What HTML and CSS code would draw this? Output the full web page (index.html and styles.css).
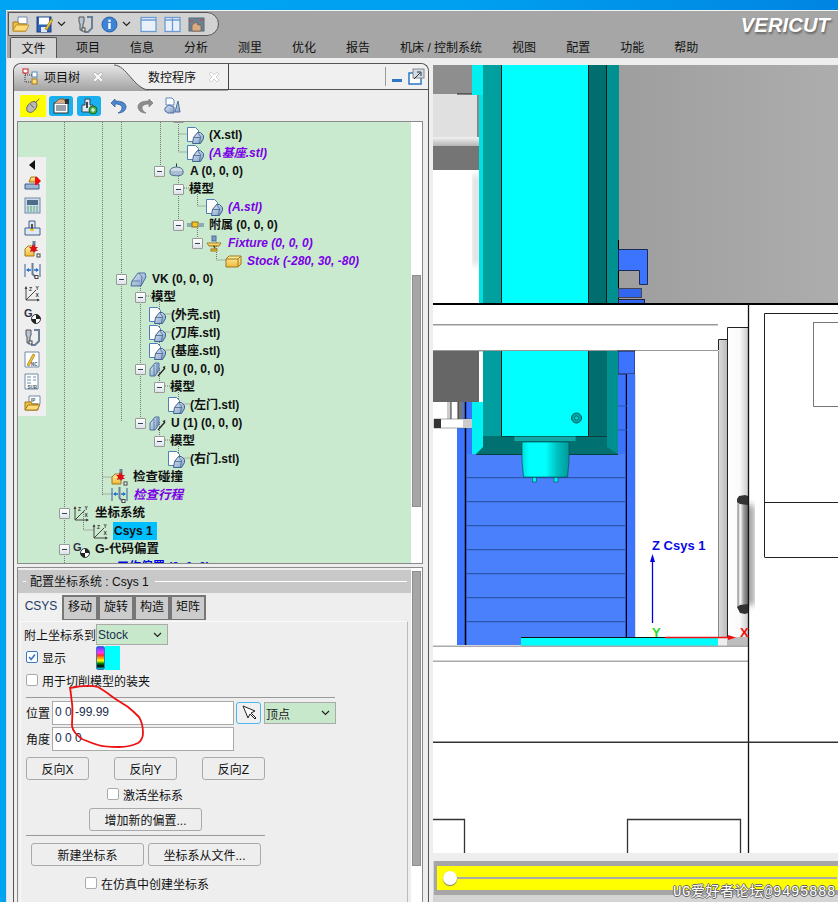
FILE: index.html
```html
<!DOCTYPE html>
<html lang="zh">
<head>
<meta charset="utf-8">
<title>VERICUT</title>
<link rel="stylesheet" href="styles.css">
</head>
<body>
<svg class="defs" aria-hidden="true">
  <defs>
    <linearGradient id="prism" x1="0" y1="0" x2="1" y2="1"><stop offset="0" stop-color="#dfe9f5"/><stop offset="1" stop-color="#7f9cc4"/></linearGradient>
    <linearGradient id="gold" x1="0" y1="0" x2="0" y2="1"><stop offset="0" stop-color="#fff2a8"/><stop offset="1" stop-color="#f0b93c"/></linearGradient>
    <symbol id="i-stl" viewBox="0 0 17 17"><path d="M.5.5h8l3 3v11H.5z" fill="#fff" stroke="#4f7fb8"/><path d="M5.500 16.500l1-6 4-5h3l3 3v3l-3 5z" fill="url(#prism)" stroke="#3f638f"/><path d="M10.500 5.500l3 4-1 7M6.500 10.500h7" fill="none" stroke="#3f638f" stroke-width=".8"/></symbol>
    <symbol id="i-a" viewBox="0 0 17 17"><path d="M8.500 .5v5" stroke="#333"/><ellipse cx="8.500" cy="8" rx="6.500" ry="4" fill="#cfdbe8" stroke="#56718f"/><path d="M2 8v2.500c0 3 13 3 13 0V8" fill="#a9bdd3" stroke="#56718f"/></symbol>
    <symbol id="i-vk" viewBox="0 0 17 17"><path d="M1 15l1-5 6-8h7l1 4-5 9z" fill="url(#prism)" stroke="#4a6f9f"/><path d="M9 2l3 4-1 9M2 10h8" fill="none" stroke="#4a6f9f" stroke-width=".8"/></symbol>
    <symbol id="i-u" viewBox="0 0 17 17"><path d="M1 15V8l5-6h4v7l-4 6z" fill="url(#prism)" stroke="#4a6f9f"/><path d="M5 4v11M8 3v9" stroke="#4a6f9f" stroke-width=".8"/><path d="M9 15l7-8" stroke="#222" stroke-width="1.300"/><path d="M16.500 5l-3 1 2 2z" fill="#222"/></symbol>
    <symbol id="i-att" viewBox="0 0 17 17"><path d="M0 7h5M12 7h5M0 9h5M12 9h5" stroke="#4a6f9f"/><rect x="5" y="5" width="6" height="5" fill="#f5c52f" stroke="#8b6a14"/></symbol>
    <symbol id="i-fix" viewBox="0 0 17 17"><rect x="6" y="1" width="4" height="5" fill="#7f9cc4" stroke="#4a6f9f"/><path d="M1 8h14l-2 3H3z" fill="url(#gold)" stroke="#a0781c"/><path d="M7 11h2v3" stroke="#a0781c"/><rect x="5" y="14" width="6" height="2" fill="#f5c52f" stroke="#a0781c"/></symbol>
    <symbol id="i-stock" viewBox="0 0 17 17"><path d="M1 6l3-3h12v8l-3 3H1z" fill="url(#gold)" stroke="#a0781c"/><path d="M1 6h12v8M13 6l3-3" fill="none" stroke="#a0781c"/></symbol>
    <symbol id="i-col" viewBox="0 0 17 17"><path d="M1 8l3-3h6v10H1z" fill="url(#gold)" stroke="#a0781c"/><path d="M10 0v11" stroke="#6b7f98" stroke-width="3"/><path d="M8 3l1 2 2-2 0 3 3 0-2 2 2 2-3 0-1 2-1-2-3 1 1-3-2-2h3z" fill="#dc0f14"/><rect x="13" y="13" width="3" height="3" fill="#fff" stroke="#444"/></symbol>
    <symbol id="i-trv" viewBox="0 0 17 17"><path d="M1 1v13M16 1v13" stroke="#3a5f95"/><path d="M3 7h4M10 7h4" stroke="#1f6fd0" stroke-width="1.300"/><path d="M2 7l3-2v4zM15 7l-3-2v4z" fill="#1f6fd0"/><path d="M8.500 0v11l3 3" fill="none" stroke="#6b7f98" stroke-width="2"/><rect x="11" y="12.500" width="3" height="3" fill="#fff" stroke="#444"/></symbol>
    <symbol id="i-csys" viewBox="0 0 17 17"><path d="M2 2v13h13M2 15L12 5" fill="none" stroke="#444"/><path d="M2 1L.5 4h3zM16 15l-3-1.500v3z" fill="#444"/><text x="5" y="6" class="ic-t">Z</text><text x="11.500" y="5" class="ic-t">Y</text><text x="11.500" y="12" class="ic-t">X</text></symbol>
    <symbol id="i-g" viewBox="0 0 17 17"><text x="0" y="10" class="ic-g">G</text><circle cx="12" cy="12" r="4.500" fill="#fff" stroke="#333"/><path d="M12 7.500a4.500 4.500 0 0 1 4.500 4.500H12zM12 16.500A4.500 4.500 0 0 1 7.500 12H12z" fill="#222"/></symbol>
    <symbol id="i-tool" viewBox="0 0 17 17"><path d="M2 1h5v5l-1 2v6H3V8L2 6z" fill="#b7c4d3" stroke="#555"/><path d="M10 1h5v11l-4 4H7" fill="none" stroke="#6b7f98" stroke-width="2"/><rect x="5" y="12" width="3" height="3" fill="#fff" stroke="#444"/></symbol>
    <symbol id="i-print" viewBox="0 0 17 17"><path d="M5 7l2-5h6v5z" fill="url(#gold)" stroke="#a0781c"/><path d="M1 9h14v5H1z" fill="#9db6d4" stroke="#3f5f88"/><path d="M11 2h2l4 4-4 4h-2z" fill="#ef0d0d"/></symbol>
    <symbol id="i-mon" viewBox="0 0 17 17"><rect x="1" y="1" width="15" height="15" fill="#cfdbe8" stroke="#6e8aa8"/><rect x="3" y="3" width="11" height="5" fill="#4d6d88"/><path d="M3 10h11M3 12h11M3 14h11" stroke="#5a7" stroke-dasharray="2 1"/></symbol>
    <symbol id="i-fix2" viewBox="0 0 17 17"><path d="M1 9h15v7H1zM5 9V2h6v7" fill="#dfe9f5" stroke="#3f5f88"/><rect x="7" y="5" width="2" height="6" fill="#555"/><rect x="6" y="10" width="4" height="2" fill="#f5c52f"/></symbol>
    <symbol id="i-nc" viewBox="0 0 17 17"><path d="M1 1h14v15H1z" fill="#fff" stroke="#6e8aa8"/><path d="M3 14L9 3l2 1-6 11z" fill="#f5c52f" stroke="#8b6a14" stroke-width=".6"/><text x="7" y="15" class="ic-s">NC</text></symbol>
    <symbol id="i-sub" viewBox="0 0 17 17"><path d="M1 1h13v15H1z" fill="#fff" stroke="#6e8aa8"/><path d="M3 4h4M9 4h3M3 7h4M9 7h3M3 10h4" stroke="#6e8aa8"/><text x="3.500" y="16" class="ic-s">SUB</text></symbol>
    <symbol id="i-ip" viewBox="0 0 17 17"><path d="M5 1h11v8H5z" fill="#fff" stroke="#6e8aa8"/><text x="7" y="7" class="ic-s">IP</text><path d="M1 7h6l1 2h6v6H1z" fill="#f2bf3e" stroke="#a0781c"/><path d="M1 15l3-5h12l-3 5z" fill="#ffdc78" stroke="#a0781c"/></symbol>
    <symbol id="chev" viewBox="0 0 9 6"><path d="M1 1l3.500 3.500L8 1" fill="none" stroke="#222" stroke-width="1.200"/></symbol>
    <symbol id="x-mark" viewBox="0 0 12 12"><path d="M1 3l2-2 3 3 3-3 2 2-3 3 3 3-2 2-3-3-3 3-2-2 3-3z"/></symbol>
  </defs>
</svg>

<div class="top-band"></div>
<div class="window">
  <header class="titlebar">
    <div class="quick">
      <svg class="q-ic" viewBox="0 0 17 17"><path d="M6 1h9v7H6z" fill="#fff" stroke="#6e8aa8"/><path d="M1 6h5l1 2h7v7H1z" fill="#f2bf3e" stroke="#a0781c"/><path d="M1 15l3-6h13l-3 6z" fill="#ffdc78" stroke="#c4952a"/></svg>
      <svg class="q-ic" viewBox="0 0 17 17"><rect x="1" y="1" width="14" height="15" fill="#2f63b8" stroke="#1d4080"/><rect x="3" y="1.500" width="10" height="7" fill="#fff"/><rect x="5" y="11" width="6" height="5" fill="#dfe9f5"/><path d="M9 13L15 3l2 1-6 10z" fill="#f5c52f" stroke="#8b6a14" stroke-width=".6"/></svg>
      <svg class="q-ch"><use href="#chev"/></svg>
      <svg class="q-ic q-tool"><use href="#i-tool"/></svg>
      <svg class="q-ic" viewBox="0 0 17 17"><circle cx="8.500" cy="8.500" r="7.500" fill="#3e84d6" stroke="#2a5ea5"/><circle cx="8.500" cy="4.800" r="1.300" fill="#fff"/><rect x="7.300" y="7" width="2.400" height="6" fill="#fff"/></svg>
      <svg class="q-ch"><use href="#chev"/></svg>
      <svg class="q-ic q-win" viewBox="0 0 17 17"><rect x="1" y="1.500" width="15" height="14" fill="#e8f0fa" stroke="#6b9bd2" stroke-width="1.300"/><path d="M1 4h15" stroke="#6b9bd2" stroke-width="1.500"/></svg>
      <svg class="q-ic" viewBox="0 0 17 17"><rect x="1" y="1.500" width="15" height="14" fill="#e8f0fa" stroke="#6b9bd2" stroke-width="1.300"/><path d="M1 4h15M8.500 2v13" stroke="#6b9bd2" stroke-width="1.300"/></svg>
      <svg class="q-ic" viewBox="0 0 17 17"><rect x="1" y="2" width="15" height="13" fill="#6a8296" stroke="#56687a"/><path d="M4 15V9l4-3 2 3h3v6z" fill="#d8ab84" stroke="#7a5a3c" stroke-width=".7"/><path d="M2 5h3M12 4h3" stroke="#e33"/></svg>
    </div>
    <div class="logo">VERICUT</div>
  </header>
  <nav class="menu">
    <span class="menu-item active">文件</span><span class="menu-item second">项目</span><span class="menu-item">信息</span><span class="menu-item">分析</span><span class="menu-item">测里</span><span class="menu-item">优化</span><span class="menu-item">报告</span><span class="menu-item">机床 / 控制系统</span><span class="menu-item">视图</span><span class="menu-item">配置</span><span class="menu-item">功能</span><span class="menu-item">帮助</span>
  </nav>

  <main class="work">
    <section class="panel">
      <div class="tabs">
        <svg class="tab-shape" viewBox="0 0 216 27" preserveAspectRatio="none">
          <defs><linearGradient id="tabg" x1="0" y1="0" x2="0" y2="1"><stop offset="0" stop-color="#e6e6e6"/><stop offset="1" stop-color="#a2a2a2"/></linearGradient></defs>
          <path d="M0 27V8Q0 1 8 1H100C112 1 120 24 134 26V27Z" fill="url(#tabg)"/>
          <path d="M100 1C112 1 120 24 134 26H214" fill="none" stroke="#555"/>
          <path d="M214.500 0v26" stroke="#444"/>
        </svg>
        <div class="tab tab-a">
          <svg class="tab-ic" viewBox="0 0 17 17"><rect x="1" y="1" width="5" height="4" fill="#fff" stroke="#c22"/><rect x="10" y="4" width="5" height="5" fill="#fff" stroke="#5b88bd"/><rect x="10" y="11" width="5" height="5" fill="#ffdc78" stroke="#a0781c"/><path d="M3 5v9h7M3 7h7" fill="none" stroke="#333" stroke-dasharray="1 1"/></svg>
          <span>项目树</span><svg class="tab-x"><use href="#x-mark"/></svg>
        </div>
        <div class="tab tab-b"><span>数控程序</span><svg class="tab-x dim"><use href="#x-mark"/></svg></div>
        <div class="tab-tools">
          <span class="tab-sep"></span>
          <span class="tab-min"></span>
          <svg class="tab-max" viewBox="0 0 17 17"><rect x="1" y="5" width="12" height="11" fill="#fff" stroke="#2e77c4" stroke-width="1.500"/><rect x="5" y="1" width="11" height="9" fill="#cfdbe8" stroke="#888"/><path d="M6 11l6-6M9 4h4v4" fill="none" stroke="#333"/></svg>
        </div>
      </div>

      <div class="tools">
        <span class="tool-btn yellow"><svg viewBox="0 0 20 20"><path d="M3 13c0-4 5-8 8-8s4 3 3 6-5 7-8 6-3-2-3-4z" fill="#b9b9b9" stroke="#555"/><path d="M7 8l4 4M13 6l4-4" stroke="#555"/></svg></span>
        <span class="tool-btn blue"><svg viewBox="0 0 18 18"><rect x="2" y="6" width="14" height="10" fill="#fff" stroke="#333"/><path d="M4 9h10M4 11h10M4 13h10" stroke="#345"/><path d="M3 6l4-4h5l2 4" fill="#d8ab84" stroke="#7a5a3c"/><rect x="13" y="2" width="4" height="5" fill="#333"/></svg></span>
        <span class="tool-btn blue"><svg viewBox="0 0 18 18"><path d="M2 15V8h3V2h5v6h3v7z" fill="#dfe9f5" stroke="#345"/><rect x="6" y="5" width="2" height="6" fill="#444"/><circle cx="13" cy="13" r="4" fill="#4cb04c" stroke="#1a6a1a"/><path d="M11 13h4M13 11v4" stroke="#fff"/></svg></span>
        <svg class="tool-plain first" viewBox="0 0 17 17"><path d="M5 2L1 6l4 4V7c4 0 7 1 7 4 0 2-2 4-4 5 5 0 8-3 8-6 0-4-4-6-11-6z" fill="#4e88cf" stroke="#26558f" stroke-width=".7"/></svg>
        <svg class="tool-plain" viewBox="0 0 17 17"><path d="M12 2l4 4-4 4V7C8 7 5 8 5 11c0 2 2 4 4 5-5 0-8-3-8-6 0-4 4-6 11-6z" fill="#8c8c8c" stroke="#777" stroke-width=".7"/></svg>
        <svg class="tool-plain" viewBox="0 0 17 17"><path d="M2 1h6l2 2v5H2z" fill="#fff" stroke="#5b88bd"/><path d="M1 11l4-3 5 2v6H4l-3-2z" fill="url(#prism)" stroke="#4a6f9f"/><path d="M11 15l3-11 2 11z" fill="url(#prism)" stroke="#4a6f9f"/></svg>
      </div>

      <div class="tree-box">
        <div class="tree">
          <svg class="tree-lines" viewBox="18 122 393 441">
            <path d="M64.500 122V563M102.500 122V495M121.500 122V422M160.500 122V170M178.500 122V152M178.500 134H190M178.500 152H190M178.500 170V224M184 188H189M197.500 188V206M197.500 206H208M197.500 224V242M216.500 242V260M216.500 260H228M140.500 278V422M146 296H151M159.500 296V350M159.500 314H171M159.500 332H171M159.500 350H171M159.500 368V386M165 386H170M178.500 386V404M178.500 404H190M159.500 422V440M165 440H170M178.500 440V458M178.500 458H190M102.500 477H113M102.500 494H113M83.500 512V530M83.500 530H94" fill="none" stroke="#777" stroke-dasharray="1 1"/>
          </svg>
          <div class="rows">
            <div class="row l6"><span class="tg"></span><span class="lbl big">模型</span></div>
            <div class="row l6"><span class="sp"></span><svg class="ic"><use href="#i-stl"/></svg><span class="lbl">(X.stl)</span></div>
            <div class="row l6"><span class="sp"></span><svg class="ic"><use href="#i-stl"/></svg><span class="lbl it">(A基座.stl)</span></div>
            <div class="row l5"><span class="tg"></span><svg class="ic"><use href="#i-a"/></svg><span class="lbl">A (0, 0, 0)</span></div>
            <div class="row l6"><span class="tg"></span><span class="lbl big">模型</span></div>
            <div class="row l7"><span class="sp"></span><svg class="ic"><use href="#i-stl"/></svg><span class="lbl it">(A.stl)</span></div>
            <div class="row l6"><span class="tg"></span><svg class="ic"><use href="#i-att"/></svg><span class="lbl">附属 (0, 0, 0)</span></div>
            <div class="row l7"><span class="tg"></span><svg class="ic"><use href="#i-fix"/></svg><span class="lbl it">Fixture (0, 0, 0)</span></div>
            <div class="row l8"><span class="sp"></span><svg class="ic"><use href="#i-stock"/></svg><span class="lbl it">Stock (-280, 30, -80)</span></div>
            <div class="row l3"><span class="tg"></span><svg class="ic"><use href="#i-vk"/></svg><span class="lbl">VK (0, 0, 0)</span></div>
            <div class="row l4"><span class="tg"></span><span class="lbl big">模型</span></div>
            <div class="row l4"><span class="sp"></span><svg class="ic"><use href="#i-stl"/></svg><span class="lbl">(外壳.stl)</span></div>
            <div class="row l4"><span class="sp"></span><svg class="ic"><use href="#i-stl"/></svg><span class="lbl">(刀库.stl)</span></div>
            <div class="row l4"><span class="sp"></span><svg class="ic"><use href="#i-stl"/></svg><span class="lbl">(基座.stl)</span></div>
            <div class="row l4"><span class="tg"></span><svg class="ic"><use href="#i-u"/></svg><span class="lbl">U (0, 0, 0)</span></div>
            <div class="row l5"><span class="tg"></span><span class="lbl big">模型</span></div>
            <div class="row l5"><span class="sp"></span><svg class="ic"><use href="#i-stl"/></svg><span class="lbl">(左门.stl)</span></div>
            <div class="row l4"><span class="tg"></span><svg class="ic"><use href="#i-u"/></svg><span class="lbl">U (1) (0, 0, 0)</span></div>
            <div class="row l5"><span class="tg"></span><span class="lbl big">模型</span></div>
            <div class="row l5"><span class="sp"></span><svg class="ic"><use href="#i-stl"/></svg><span class="lbl">(右门.stl)</span></div>
            <div class="row l2"><span class="sp"></span><svg class="ic"><use href="#i-col"/></svg><span class="lbl big">检查碰撞</span></div>
            <div class="row l2"><span class="sp"></span><svg class="ic"><use href="#i-trv"/></svg><span class="lbl it big">检查行程</span></div>
            <div class="row l0"><span class="tg"></span><svg class="ic"><use href="#i-csys"/></svg><span class="lbl big">坐标系统</span></div>
            <div class="row l1"><span class="sp"></span><svg class="ic"><use href="#i-csys"/></svg><span class="lbl sel">Csys 1</span></div>
            <div class="row l0"><span class="tg"></span><svg class="ic"><use href="#i-g"/></svg><span class="lbl big">G-代码偏置</span></div>
            <div class="row l1"><span class="sp"></span><span class="lbl blue-t">工作偏置 (0, 0, 0)</span></div>
          </div>
          <div class="side-tools">
            <span class="side-arrow"></span>
            <svg class="ic"><use href="#i-print"/></svg>
            <svg class="ic"><use href="#i-mon"/></svg>
            <svg class="ic"><use href="#i-fix2"/></svg>
            <svg class="ic"><use href="#i-col"/></svg>
            <svg class="ic"><use href="#i-trv"/></svg>
            <svg class="ic"><use href="#i-csys"/></svg>
            <svg class="ic"><use href="#i-g"/></svg>
            <svg class="ic"><use href="#i-tool"/></svg>
            <svg class="ic"><use href="#i-nc"/></svg>
            <svg class="ic"><use href="#i-sub"/></svg>
            <svg class="ic"><use href="#i-ip"/></svg>
          </div>
        </div>
        <div class="scroll tree-scroll"><span class="thumb"></span></div>
      </div>

      <div class="cfg-box">
        <div class="cfg">
          <div class="cfg-head"><span class="cfg-dash"></span><span class="cfg-title">配置坐标系统 : Csys 1</span><span class="cfg-line"></span></div>
          <div class="cfg-tabs">
            <span class="ctab on">CSYS</span><span class="ctab">移动</span><span class="ctab">旋转</span><span class="ctab">构造</span><span class="ctab">矩阵</span>
          </div>
          <div class="page">
            <div class="f-attach"><span class="f-attach-l">附上坐标系到</span><span class="select s-stock">Stock<svg class="sel-ch"><use href="#chev"/></svg></span></div>
            <div class="f-show">
              <span class="chk on"><svg viewBox="0 0 12 12"><path d="M2.500 6l2.500 3 4.500-6" fill="none" stroke="#3a78c0" stroke-width="2"/></svg></span>
              <span class="chk-l show-l">显示</span>
              <span class="swatch"><span class="sw-bar"></span><span class="sw-col"></span></span>
            </div>
            <div class="f-check f-use"><span class="chk"></span><span class="chk-l">用于切削模型的装夹</span></div>
            <hr class="rule r-long">
            <div class="f-input"><span class="in-l">位置</span><span class="input">0 0 -99.99</span>
              <span class="pick"><svg viewBox="0 0 18 18"><path d="M3 2l5 12 2-4 5 5 1-1-5-5 4-2z" fill="#fff" stroke="#222"/></svg></span>
              <span class="select s-vertex">顶点<svg class="sel-ch"><use href="#chev"/></svg></span>
            </div>
            <div class="f-input f-angle"><span class="in-l">角度</span><span class="input">0 0 0</span></div>
            <div class="f-rev"><span class="btn b-rev">反向X</span><span class="btn b-rev">反向Y</span><span class="btn b-rev">反向Z</span></div>
            <div class="f-check f-act"><span class="chk"></span><span class="chk-l">激活坐标系</span></div>
            <div class="f-add"><span class="btn b-add">增加新的偏置...</span></div>
            <hr class="rule r-short">
            <div class="f-new"><span class="btn b-new">新建坐标系</span><span class="btn b-new">坐标系从文件...</span></div>
            <div class="f-check f-sim"><span class="chk"></span><span class="chk-l">在仿真中创建坐标系</span></div>
          </div>
        </div>
        <div class="scroll cfg-scroll"><span class="thumb"></span></div>
      </div>
    </section>

    <section class="view">
      <svg class="scene" viewBox="433 65 405 788" role="img" aria-label="机床视图">
        <defs>
          <linearGradient id="wall" x1="0" y1="0" x2="1" y2="0"><stop offset="0" stop-color="#9e9e9e"/><stop offset="1" stop-color="#adadad"/></linearGradient>
          <linearGradient id="strip" x1="0" y1="0" x2="0" y2="1"><stop offset="0" stop-color="#f2f2f2"/><stop offset="1" stop-color="#b5b5b5"/></linearGradient>
          <linearGradient id="post" x1="0" y1="0" x2="1" y2="0"><stop offset="0" stop-color="#ddd"/><stop offset="1" stop-color="#bcbcbc"/></linearGradient>
          <linearGradient id="post2" x1="0" y1="0" x2="1" y2="0"><stop offset="0" stop-color="#fff"/><stop offset=".6" stop-color="#fafafa"/><stop offset="1" stop-color="#ccc"/></linearGradient>
          <linearGradient id="spindle" x1="0" y1="0" x2="1" y2="0"><stop offset="0" stop-color="#00dcdc"/><stop offset=".15" stop-color="#0ff"/><stop offset=".5" stop-color="#0ff"/><stop offset=".75" stop-color="#00c0c0"/><stop offset="1" stop-color="#009a9a"/></linearGradient>
          <linearGradient id="hand" x1="0" y1="0" x2="1" y2="0"><stop offset="0" stop-color="#777"/><stop offset=".25" stop-color="#fff"/><stop offset=".6" stop-color="#9a9a9a"/><stop offset="1" stop-color="#666"/></linearGradient>
          <filter id="soft"><feGaussianBlur stdDeviation="3"/></filter>
        </defs>
        <rect x="433" y="65" width="405" height="788" fill="#fff"/>

        <!-- upper wall -->
        <rect x="618" y="65" width="220" height="238" fill="url(#wall)"/>
        <rect x="433" y="65" width="40" height="30" fill="#8e8e8e"/>
        <rect x="433" y="94" width="45" height="43" fill="#e0e0e0"/>
        <path d="M457 94h21v43" fill="none" stroke="#222" stroke-width="1"/>
        <rect x="433" y="137" width="46" height="9" fill="url(#strip)"/>
        <rect x="433" y="146" width="46" height="24" fill="#757575"/>
        <rect x="433" y="170" width="46" height="132" fill="#fff"/>
        <rect x="473" y="175" width="6" height="90" fill="#777" opacity=".3" filter="url(#soft)"/>

        <!-- column upper -->
        <rect x="472" y="65" width="11" height="30" fill="#00f0f0"/>
        <rect x="479" y="95" width="4" height="208" fill="#00e0e0"/>
        <rect x="483" y="65" width="18" height="238" fill="#00a09e"/>
        <rect x="501" y="65" width="88" height="238" fill="#0ff"/>
        <rect x="589" y="65" width="18" height="238" fill="#006e6e"/>
        <rect x="607" y="65" width="12" height="238" fill="#009090"/>
        <path d="M501.500 65v238M588.500 65v238M606.500 65v238" stroke="#061c1c"/>
        <path d="M618.500 240v63" stroke="#000"/>

        <!-- blue clamps -->
        <path d="M618.500 249.500H647.500V284.500H639.500V270.500H618.500z" fill="#3c73ff" stroke="#1a2a55"/>
        <rect x="618.500" y="288.500" width="23" height="9" fill="#3366ee" stroke="#445"/>
        <rect x="618.500" y="299.500" width="26" height="4" fill="#3366ee" stroke="#223"/>

        <!-- shelf -->
        <rect x="433" y="303" width="405" height="2" fill="#000"/>
        <rect x="433" y="324" width="285" height="1.500" fill="#999"/>
        <rect x="433" y="350" width="285" height="1.500" fill="#999"/>

        <!-- cabinet right -->
        <path d="M764.500 557V313.500H838M764.500 502.500H838M764.500 557.500H838" fill="none" stroke="#222"/>
        <path d="M813.500 322V406.500H838M813.500 322.500H838" fill="none" stroke="#777"/>

        <!-- lower machine -->
        <rect x="433" y="351" width="46" height="51" fill="#666"/>

        <rect x="457" y="402" width="178" height="243" fill="#3c73ff"/>
        <rect x="618" y="374" width="9" height="30" fill="#3c73ff"/>
        <rect x="467" y="454" width="158" height="191" fill="#4a80fb"/>
        <path d="M465.500 402V645M626.500 373V637" stroke="#000" stroke-width="1.500"/>
        <path d="M467 477.700H625M467 501.700H625M467 525.700H625M467 549.700H625M467 573.700H625M467 597.700H625M467 621.700H625" stroke="#2c56ac" stroke-width="1.300"/>
        <path d="M618 406H627M618 430H627" stroke="#2c56ac"/>
        <rect x="618" y="351" width="17" height="23" fill="#3c73ff" stroke="#223"/>
        <rect x="627" y="374" width="8" height="263" fill="#3c73ff"/>
        <rect x="635" y="351" width="9" height="286" fill="#fff"/>
        <path d="M644.500 351V637" stroke="#222"/>
        <path d="M635.500 374V637" stroke="#ddd"/>

        <rect x="447" y="402" width="5" height="17" fill="#ccc"/>
        <rect x="451" y="402" width="7" height="17" fill="#fff"/>
        <rect x="458" y="402" width="5" height="17" fill="#777"/>
        <path d="M451 402v17M458 402v17" stroke="#333"/>
        <rect x="434" y="419" width="41" height="9" fill="#fff" stroke="#555" stroke-width=".5"/>
        <rect x="434" y="419" width="7" height="9" fill="#333"/>
        <rect x="463" y="419" width="12" height="9" fill="#ccc"/>

        <path d="M472 402h11v52h-11z" fill="#00f2f2"/>
        <rect x="483" y="351" width="18" height="85" fill="#009e9e"/>
        <rect x="501" y="351" width="88" height="85" fill="#0ff"/>
        <rect x="589" y="351" width="18" height="85" fill="#006e6e"/>
        <rect x="607" y="351" width="11" height="103" fill="#009090"/>
        <path d="M476 454l7-7v-11h124v11l11 7z" fill="#007070"/>
        <path d="M501.500 351V436.500M588.500 351V436.500" stroke="#061c1c"/>
        <path d="M501 436.500H607M476 454.500H618" stroke="#05403f"/>
        <circle cx="576.500" cy="418" r="5" fill="#0aa" stroke="#055"/>
        <circle cx="576.500" cy="418" r="2" fill="#0dd" stroke="#044" stroke-width=".6"/>
        <rect x="514" y="436.500" width="62" height="5" fill="#12a8a8" stroke="#066" stroke-width=".6"/>
        <path d="M522 442h47v19l-1.500 16h-44L522 461z" fill="url(#spindle)" stroke="#044" stroke-width=".6"/>
        <rect x="532.500" y="477.500" width="4" height="4.500" fill="#0ee" stroke="#055" stroke-width=".6"/>
        <rect x="554" y="477.500" width="4" height="4.500" fill="#0ee" stroke="#055" stroke-width=".6"/>

        <!-- door posts -->
        <rect x="644" y="351" width="74" height="286" fill="#fff"/>
        <rect x="718" y="339" width="9" height="298" fill="url(#post)"/>
        <rect x="727" y="327" width="21" height="310" fill="url(#post2)"/>
        <path d="M718.500 350V339.500H727.500M727.500 637V327.500H748" fill="none" stroke="#222"/>
        <path d="M718.500 351V637" stroke="#888"/>

        <!-- handle -->
        <rect x="746" y="505" width="8" height="100" fill="#555" opacity=".6" filter="url(#soft)"/>
        <rect x="737.500" y="500" width="10.500" height="108" fill="url(#hand)"/>
        <path d="M737 499l2-3 6-1 3 1v9l-8-1-3-2zM737 607l3-2 8-1v9l-3 1-5-1z" fill="#333"/>

        <!-- table -->
        <rect x="521" y="637" width="197" height="9" fill="#0ff"/>
        <path d="M521 637.500H727" stroke="#111"/>
        <rect x="727" y="637" width="21" height="9" fill="#bdbdbd"/>
        <rect x="718" y="637" width="9" height="9" fill="#eee"/>
        <rect x="433" y="645.500" width="315" height="1.500" fill="#aaa"/>
        <rect x="433" y="660.500" width="315" height="1.500" fill="#aaa"/>

        <!-- structure lines -->
        <path d="M748.500 304V853" stroke="#111" stroke-width="1.300"/>
        <rect x="433" y="741.500" width="405" height="1.500" fill="#333"/>
        <path d="M433 819.500H464.500V853M627.500 853V819.500H740.500V853" fill="none" stroke="#333" stroke-width="1.300"/>

        <!-- csys -->
        <path d="M652.500 623V560" stroke="#0000e6" stroke-width="1.300"/>
        <path d="M652.500 554l-2.500 8h5z" fill="#0000e6"/>
        <text x="652" y="550" class="csys-t">Z Csys 1</text>
        <text x="652" y="637" class="axis-y">Y</text>
        <path d="M665 637.500H728" stroke="#ee1111" stroke-width="1.300"/>
        <path d="M736 637.500l-8-2.500v5z" fill="#ee1111"/>
        <text x="740" y="637" class="axis-x">X</text>
      </svg>
      <div class="timeline">
        <div class="slider"><span class="slider-track"></span><span class="slider-knob"></span></div>
      </div>
      <span class="mark">UG爱好者论坛@9495888</span>
    </section>
  </main>

  <svg class="scribble" viewBox="0 0 838 902" aria-hidden="true">
    <path d="M70 688C80 686 90 685 98 687C105 691 110 695 114 698C120 702 125 705 128 707C133 711 136 714 139 717C142 722 143 727 143 733C143 738 141 741 138 743C132 746 126 747 119 747C111 747 104 747 98 745C91 743 87 741 82 739C77 735 73 732 72 726C72 718 73 710 72 703C71 697 71 692 70 688Z" fill="none" stroke="#ee1111" stroke-width="1.800"/>
  </svg>
</div>
</body>
</html>
```
FILE: styles.css
```css
* { box-sizing: border-box; }
html, body { margin: 0; height: 902px; overflow: hidden; }
body {
  background: #00a2f2;
  font-family: "Liberation Sans", "Noto Sans CJK SC", sans-serif;
  font-size: 12px;
  color: #111;
}
.defs { position: absolute; width: 0; height: 0; }
.ic-t { font: bold 5px "Liberation Sans", sans-serif; fill: #333; }
.ic-s { font: bold 4.500px "Liberation Sans", sans-serif; fill: #456; }
.ic-g { font: bold 11px "Liberation Sans", sans-serif; fill: #334; }

.top-band { height: 10px; background: linear-gradient(90deg, #00a4f4 0%, #00a0f0 55%, #0084e2 100%); }
.window {
  position: relative;
  height: 892px;
  margin-left: 6px;
  background: #eee;
  border-top: 1px solid #f4f4f4;
  border-left: 1px solid #ddd;
  overflow: hidden;
}

.titlebar {
  display: flex;
  justify-content: space-between;
  height: 26px;
  background: #a6a6a6;
}
.quick {
  display: flex;
  align-items: center;
  width: 211px;
  height: 24px;
  margin: 1px 0 0 1px;
  padding-left: 3px;
  background: #d2d2d2;
  border: 1px solid #555;
  border-radius: 0 12px 12px 0;
}
.q-ic { width: 17px; height: 17px; flex: none; margin-right: 7px; }
.q-tool { margin-left: 7px; }
.q-win { margin-left: 5px; }
.q-ch { width: 9px; height: 6px; flex: none; margin: 0 4px 0 -3px; }
.logo {
  margin: 3px 8px 0 0;
  font: italic bold 20px "Liberation Sans", sans-serif;
  letter-spacing: .2px;
  color: #fff;
  text-shadow: 1px 2px 2px #666;
}

.menu {
  display: flex;
  height: 21px;
  padding-left: 3px;
  background: #a6a6a6;
  align-items: stretch;
  font-size: 12px;
}
.menu-item { padding: 3px 15px 0; line-height: 16px; color: #111; white-space: nowrap; }
.menu-item.active {
  width: 47px;
  padding: 3px 0 0;
  text-align: center;
  background: #d4d4d4;
  border: 1px solid #555;
  border-bottom: none;
  border-radius: 2px 2px 0 0;
}
.menu-item.second { margin-left: 4px; }

.work { display: flex; align-items: flex-start; height: 844px; }

/* left panel */
.panel {
  position: relative;
  flex: none;
  width: 416px;
  height: 850px;
  margin: 5px 0 0 6px;
  padding: 0 5px 0 3px;
  background: #eee;
  border: 1px solid #555;
  border-radius: 8px 8px 0 0;
  border-bottom: none;
}
.tabs {
  position: relative;
  display: flex;
  align-items: center;
  height: 26px;
  margin: 0 -5px 0 -3px;
  background: #f0f0f0;
  border-bottom: 1px solid #555;
  border-radius: 8px 8px 0 0;
}
.tab-shape { position: absolute; left: 0; top: 0; width: 216px; height: 27px; }
.tab { position: relative; display: flex; align-items: center; font-size: 12px; }
.tab-a { width: 134px; padding-left: 8px; }
.tab-ic { width: 17px; height: 17px; margin-right: 5px; }
.tab-x { width: 12px; height: 12px; margin-left: 12px; fill: #f4f4f4; stroke: #999; stroke-width: .5; }
.tab-x.dim { fill: #fff; stroke: #aaa; }
.tab-tools { position: relative; display: flex; align-items: center; margin-left: auto; padding-right: 3px; }
.tab-sep { width: 1px; height: 19px; margin-right: 6px; background: #999; }
.tab-min { width: 10px; height: 3px; margin: 8px 6px 0 0; background: #2e77c4; }
.tab-max { width: 17px; height: 17px; }

.tools {
  display: flex;
  align-items: center;
  height: 31px;
  padding-left: 3px;
  margin-top: 0;
}
.tool-btn { display: flex; align-items: center; justify-content: center; flex: none; }
.tool-btn svg { width: 18px; height: 18px; }
.tool-btn.yellow { width: 26px; height: 22px; margin-right: 3px; background: #ff0; }
.tool-btn.blue { width: 24px; height: 20px; margin-right: 4px; background: #19b0f0; border-radius: 3px; }
.tool-plain { width: 17px; height: 17px; margin-right: 10px; flex: none; }
.tool-plain.first { margin-left: 5px; }

.tree-box, .cfg-box {
  display: flex;
  width: 406px;
  border: 1px solid #8a8a8a;
  background: #fff;
}
.tree-box { height: 443px; }
.tree {
  position: relative;
  width: 393px;
  height: 441px;
  overflow: hidden;
  background: #caeacf;
}
.tree-lines { position: absolute; left: 0; top: 0; width: 393px; height: 441px; }
.rows { position: relative; margin-top: -14px; }
.row { display: flex; align-items: center; height: 18px; }
.l0 { padding-left: 41px; }
.l1 { padding-left: 60px; }
.l2 { padding-left: 79px; }
.l3 { padding-left: 98px; }
.l4 { padding-left: 117px; }
.l5 { padding-left: 136px; }
.l6 { padding-left: 155px; }
.l7 { padding-left: 174px; }
.l8 { padding-left: 193px; }
.tg {
  position: relative;
  flex: none;
  width: 11px;
  height: 11px;
  background: linear-gradient(#fff, #dde3ea);
  border: 1px solid #999;
  border-radius: 1px;
}
.tg::before {
  content: "";
  position: absolute;
  left: 2px;
  top: 4px;
  width: 5px;
  height: 1px;
  background: #345;
}
.tg + .lbl { margin-left: 5px; }
.sp { flex: none; width: 11px; }
.ic { flex: none; width: 17px; height: 17px; margin: 0 5px 0 3px; }
.lbl { font-weight: bold; font-size: 12px; color: #111; white-space: nowrap; line-height: 18px; }
.lbl.big { font-size: 12.500px; }
.lbl.it { font-style: italic; color: #7a00e6; }
.lbl.sel { background: #00bfff; padding: 0 4px 0 1px; margin-left: -1px; }
.blue-t { margin-left: 28px; color: #0000e0; }

.side-tools {
  position: absolute;
  left: 0;
  top: 35px;
  display: flex;
  flex-direction: column;
  align-items: center;
  gap: 5px;
  width: 28px;
  height: 259px;
  padding-top: 3px;
  background: #efefef;
}
.side-tools .ic { margin: 0; }
.side-arrow {
  width: 0;
  height: 0;
  border-top: 5px solid transparent;
  border-bottom: 5px solid transparent;
  border-right: 6px solid #111;
}

.scroll { flex: 1; padding-left: 1px; }
.thumb { display: block; width: 9px; background: #a6a6a6; border: 1px solid #8e8e8e; }
.tree-scroll { padding-top: 153px; }
.tree-scroll .thumb { height: 232px; }

.cfg-box { height: 340px; margin-top: 3px; }
.cfg { width: 393px; height: 338px; background: #eee; overflow: hidden; }
.cfg-scroll { padding-top: 3px; }
.cfg-scroll .thumb { height: 295px; }
.cfg-head {
  display: flex;
  align-items: center;
  height: 23px;
  margin-top: 2px;
  padding: 0 4px 0 5px;
  background: #c8c8c8;
  font-size: 12px;
}
.cfg-dash { width: 3px; height: 1px; margin-right: 4px; background: #fff; }
.cfg-title { padding-bottom: 3px; white-space: nowrap; color: #111; }
.cfg-line { flex: 1; height: 1px; margin-left: 6px; background: #fff; }
.cfg-tabs { display: flex; height: 26px; margin: 2px 0 0 2px; }
.ctab {
  width: 36px;
  height: 25px;
  margin-right: 0;
  text-align: center;
  line-height: 21px;
  background: #ccc;
  border: 2px solid #777;
  border-bottom-width: 1px;
  white-space: nowrap;
}
.ctab.on {
  width: 42px;
  background: #f0f0f0;
  border: none;
  color: #1f3a66;
  line-height: 22px;
}
.page {
  position: relative;
  width: 388px;
  height: 290px;
  margin-left: 2px;
  padding-left: 5px;
  border-top: 1px solid #fafafa;
  border-right: 1px solid #bbb;
  border-left: 1px solid #fafafa;
}
.f-attach { display: flex; align-items: center; height: 21px; margin: 2px 0 0 -2px; }
.f-attach-l { width: 72px; white-space: nowrap; }
.select {
  position: relative;
  display: flex;
  align-items: center;
  background: #c8e8cc;
  border: 1px solid #aaa;
  padding-left: 1px;
  height: 21px;
  color: #1a2f4f;
}
.s-stock { width: 72px; }
.s-vertex { width: 72px; height: 22px; margin-left: 3px; color: #222; }
.sel-ch { position: absolute; right: 5px; top: 7px; width: 9px; height: 6px; }
.f-show { display: flex; align-items: center; height: 24px; margin-top: 1px; }
.f-show .chk, .f-show .chk-l { margin-bottom: 2px; }
.chk {
  display: inline-block;
  flex: none;
  width: 12px;
  height: 12px;
  background: #fff;
  border: 1px solid #aaa;
  border-radius: 2px;
}
.chk svg { display: block; width: 10px; height: 10px; }
.chk.on { border-color: #3a78c0; }
.chk-l { margin-left: 4px; white-space: nowrap; }
.show-l { width: 54px; }
.swatch { display: flex; width: 24px; height: 24px; }
.sw-bar {
  width: 9px;
  background: linear-gradient(#4040ff, #a040ff, #ff30ff, #ff3030, #ffa000, #ffff00, #008000, #000, #00e0e0);
  border: 1px solid #3a78c0;
  border-radius: 2px;
}
.sw-col { flex: 1; background: #0ff; }
.f-check { display: flex; align-items: center; height: 16px; }
.f-use { margin-top: 2px; }
.rule { height: 1px; margin: 0; border: none; background: #999; }
.r-long { width: 309px; margin-top: 9px; }
.f-input { display: flex; align-items: center; height: 24px; margin-top: 3px; }
.in-l { width: 26px; padding-bottom: 2px; white-space: nowrap; }
.input {
  width: 182px;
  height: 24px;
  padding-left: 2px;
  line-height: 20px;
  background: #fff;
  border: 1px solid #aaa;
  color: #1a2f4f;
}
.pick {
  display: flex;
  align-items: center;
  justify-content: center;
  width: 25px;
  height: 22px;
  margin-left: 2px;
  background: #f0f0f0;
  border: 1px solid #4db8f0;
  border-radius: 3px;
}
.pick svg { width: 18px; height: 18px; }
.f-angle { margin-top: 2px; }
.btn {
  display: flex;
  align-items: center;
  justify-content: center;
  height: 23px;
  background: #eee;
  border: 1px solid #aaa;
  border-radius: 3px;
  white-space: nowrap;
}
.f-rev { display: flex; gap: 25px; margin-top: 6px; }
.b-rev { width: 63px; }
.f-act { margin: 6px 0 0 81px; }
.f-add { margin: 6px 0 0 63px; }
.b-add { width: 113px; }
.r-short { width: 239px; margin-top: 4px; }
.f-new { display: flex; gap: 4px; margin: 7px 0 0 5px; }
.b-new { width: 113px; }
.f-sim { margin: 9px 0 0 59px; }

/* 3D view */
.view { position: relative; flex: none; width: 405px; height: 838px; margin: 7px 0 0 4px; }
.scene { display: block; width: 405px; height: 788px; }
.csys-t { font: bold 13px "Liberation Sans", sans-serif; fill: #0a0ae6; }
.axis-y { font: bold 13px "Liberation Sans", sans-serif; fill: #22dd22; }
.axis-x { font: bold 13px "Liberation Sans", sans-serif; fill: #ee1111; }
.timeline { height: 49px; padding: 8px 0 0 1px; background: linear-gradient(#eee 8px, #d4d4d4 8px); }
.slider {
  position: relative;
  height: 34px;
  background: #ff0;
  border: solid #a6a6a6;
  border-width: 5px 0 5px 3px;
}
.slider-track { position: absolute; left: 13px; right: 1px; top: 11px; height: 2px; background: #aaa; }
.slider-knob {
  position: absolute;
  left: 6px;
  top: 5px;
  width: 14px;
  height: 14px;
  background: #fff;
  border-radius: 50%;
  box-shadow: 0 1px 1px #777;
}
.mark {
  position: absolute;
  right: 2px;
  top: 815px;
  font: 14px "Liberation Mono", "Noto Sans CJK SC", monospace;
  letter-spacing: .6px;
  color: #fff;
  text-shadow: 1px 0 0 #666, -1px 0 0 #666, 0 1px 0 #666, 0 -1px 0 #666;
  white-space: nowrap;
}
.scribble { position: absolute; left: -7px; top: -11px; width: 838px; height: 902px; pointer-events: none; }
```
